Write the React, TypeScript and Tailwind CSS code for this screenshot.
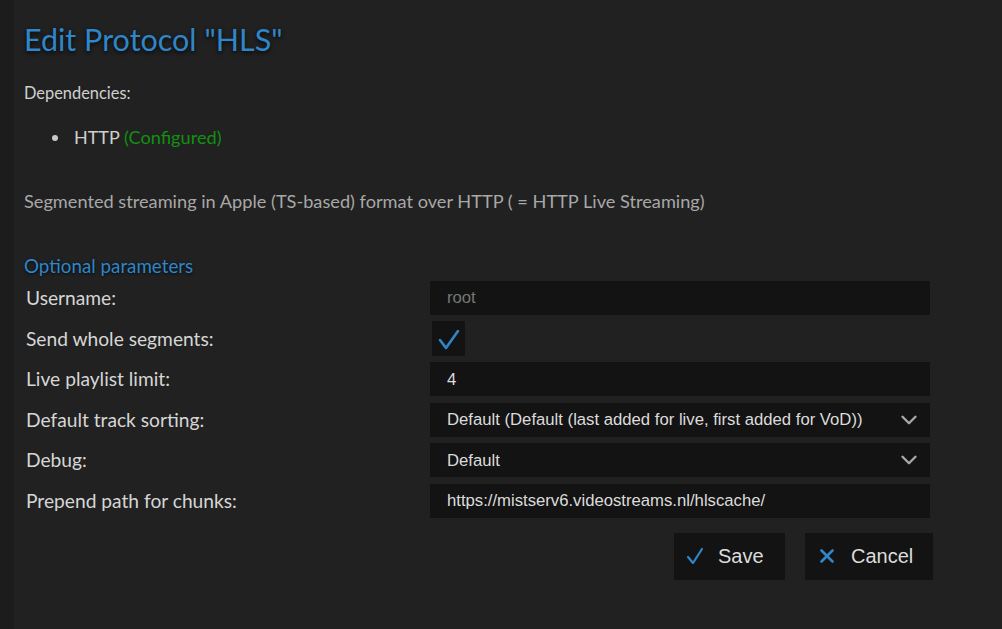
import { ChevronDown } from "lucide-react";

const blue = "text-[#2f86c9]";

function Row({ label, children }: { label: string; children: React.ReactNode }) {
  return (
    <div className="flex items-center h-[34px] mb-[6.6px]">
      <label className="w-[406px] pl-[2px] text-[19.2px] leading-[24px] text-[#d6d6d6]">{label}</label>
      <div className="w-[500px]">{children}</div>
    </div>
  );
}

function Field({ value, muted }: { value: string; muted?: boolean }) {
  return (
    <div
      className={`h-[34px] bg-[#131313] pl-[17px] flex items-center text-[16.7px] font-['Liberation_Sans',sans-serif] ${
        muted ? "text-[#777]" : "text-[#dcdcdc]"
      }`}
    >
      {value}
    </div>
  );
}

function Select({ value }: { value: string }) {
  return (
    <div className="h-[34px] bg-[#131313] pl-[17px] pr-[8px] flex items-center justify-between text-[16.7px] text-[#dcdcdc] font-['Liberation_Sans',sans-serif]">
      <span>{value}</span>
      <ChevronDown size={26} strokeWidth={2.2} className="text-[#a8a8a8]" />
    </div>
  );
}

export default function App() {
  return (
    <div className="flex w-full h-[629px] bg-[#212121] overflow-hidden font-['Lato',sans-serif]">
      <div className="w-[14px] shrink-0 bg-[#1c1c1c]" />
      <div className="pl-[10px] pt-[21px] flex-1">
        <h1 className={`text-[30.5px] leading-[36px] ${blue} [text-shadow:0_2px_4px_rgba(0,0,0,0.8)]`}>
          Edit Protocol "HLS"
        </h1>
        <p className="mt-[26px] text-[16.4px] leading-[20px] text-[#d0d0d0]">Dependencies:</p>
        <ul className="mt-[24px] ml-[47px] list-disc text-[18px] leading-[20px] h-[20px] text-[#d0d0d0] marker:text-[#c8c8c8]">
          <li className="pl-[3px] h-[20px]">
            HTTP <span className="text-[#129012] text-[18.2px] leading-none">(Configured)</span>
          </li>
        </ul>
        <p className="mt-[44px] text-[18.2px] leading-[20px] text-[#a8a8a8]">
          Segmented streaming in Apple (TS-based) format over HTTP ( = HTTP Live Streaming)
        </p>
        <h3 className={`mt-[45px] text-[18.8px] leading-[20px] ${blue} [text-shadow:0_1px_3px_rgba(0,0,0,0.8)]`}>
          Optional parameters
        </h3>
        <div className="mt-[5px]">
          <Row label="Username:">
            <Field value="root" muted />
          </Row>
          <Row label="Send whole segments:">
            <div className="ml-[2px] w-[33px] h-[35px] bg-[#131313] flex items-center justify-center">
              <svg width="22" height="22" viewBox="0 0 22 22" fill="none">
                <path d="M2 12 L8 20 L20 3" stroke="#2f86c9" strokeWidth="2.6" strokeLinecap="round" strokeLinejoin="round" />
              </svg>
            </div>
          </Row>
          <Row label="Live playlist limit:">
            <Field value="4" />
          </Row>
          <Row label="Default track sorting:">
            <Select value="Default (Default (last added for live, first added for VoD))" />
          </Row>
          <Row label="Debug:">
            <Select value="Default" />
          </Row>
          <Row label="Prepend path for chunks:">
            <Field value="https://mistserv6.videostreams.nl/hlscache/" />
          </Row>
        </div>
        <div className="w-[909px] flex justify-end gap-[20px] mt-[15px] font-['Liberation_Sans',sans-serif]">
          <button className="w-[111px] h-[47px] bg-[#131313] flex items-center pl-[13px] gap-[15px] text-[20px] text-[#dcdcdc]">
            <svg width="16" height="18" viewBox="0 0 16 18" fill="none">
              <path d="M1 10 L6 16 L15 2" stroke="#2f86c9" strokeWidth="2.2" strokeLinecap="round" strokeLinejoin="round" />
            </svg>
            Save
          </button>
          <button className="w-[128px] h-[47px] bg-[#131313] flex items-center pl-[15px] gap-[17px] text-[20px] text-[#dcdcdc]">
            <svg width="14" height="14" viewBox="0 0 14 14" fill="none">
              <path d="M1.5 1.5 L12.5 12.5 M12.5 1.5 L1.5 12.5" stroke="#2f86c9" strokeWidth="2.6" strokeLinecap="round" />
            </svg>
            Cancel
          </button>
        </div>
      </div>
    </div>
  );
}
